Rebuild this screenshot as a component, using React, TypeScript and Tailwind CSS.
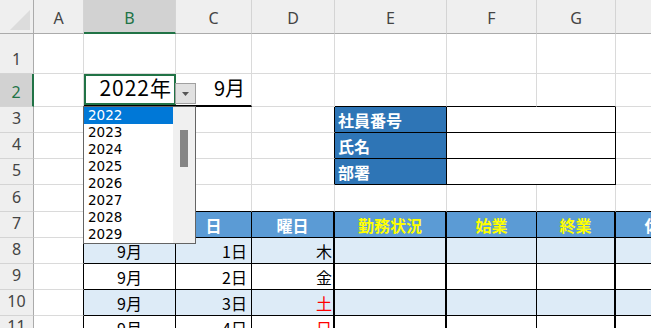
const jp = "font-['Noto_Sans_CJK_JP',sans-serif]";

const days = [
  { d: 1, w: "木", red: false },
  { d: 2, w: "金", red: false },
  { d: 3, w: "土", red: true },
  { d: 4, w: "日", red: true },
];

const years = ["2022", "2023", "2024", "2025", "2026", "2027", "2028", "2029"];

function ColHead({ label, sel = false }: { label: string; sel?: boolean }) {
  return (
    <div
      className={`flex items-center justify-center pt-[3px] border-r border-r-[#d4d4d4] font-['Noto_Sans',sans-serif] text-[16px] ${
        sel
          ? "bg-[#d2d2d2] border-b-2 border-b-[#217346] text-[#217346]"
          : "bg-[#efefef] border-b border-b-[#ababab] text-[#444]"
      }`}
    >
      {label}
    </div>
  );
}

function RowHead({ n, sel = false }: { n: number; sel?: boolean }) {
  return (
    <div
      className={`flex items-end justify-center pb-[6px] leading-none border-b border-b-[#d4d4d4] font-['Noto_Sans',sans-serif] text-[16px] ${
        sel
          ? "bg-[#d2d2d2] border-r-2 border-r-[#217346] text-[#217346]"
          : "bg-[#efefef] border-r border-r-[#ababab] text-[#444]"
      }`}
    >
      {n}
    </div>
  );
}

const cell = "border-r border-b border-r-[#dadada] border-b-[#dadada] bg-white";

export default function App() {
  return (
    <div className={`relative w-[651px] h-[328px] overflow-hidden bg-white ${jp}`}>
      <div className="grid grid-cols-[34px_50px_92px_76px_83px_112px_90px_79px_122px] grid-rows-[34px_40px_33px_26px_26px_26px_27px_26px_26px_26px_26px]">
        {/* column headers */}
        <div className="relative bg-[#efefef] border-r border-b border-r-[#ababab] border-b-[#ababab]">
          <svg className="absolute left-[10px] top-[10px]" width="20" height="20" viewBox="0 0 20 20">
            <polygon points="20,0 20,20 0,20" fill="#dcdcdc" />
          </svg>
        </div>
        <ColHead label="A" />
        <ColHead label="B" sel />
        <ColHead label="C" />
        <ColHead label="D" />
        <ColHead label="E" />
        <ColHead label="F" />
        <ColHead label="G" />
        <ColHead label="H" />

        {/* row 1 */}
        <RowHead n={1} />
        {Array.from({ length: 8 }).map((_, i) => (
          <div key={i} className={cell} />
        ))}

        {/* row 2 */}
        <RowHead n={2} sel />
        <div className={cell} />
        <div className="flex items-center justify-end pr-[4px] pb-[3px] bg-white border-b-2 border-b-black shadow-[inset_0_0_0_2px_#217346] text-[21px] tracking-[1px] text-black">
          2022年
        </div>
        <div className="flex items-center justify-end pr-[6px] pb-[3px] bg-white border-r border-r-[#dadada] border-b-2 border-b-black text-[20px] text-black">
          9月
        </div>
        <div className={cell} />
        <div className="bg-white border-r border-b border-r-[#dadada] border-b-black" />
        <div className="bg-white border-r border-b border-r-[#dadada] border-b-black" />
        <div className="bg-white border-r border-b border-r-[#dadada] border-b-black" />
        <div className={cell} />

        {/* rows 3-5: info box */}
        {["社員番号", "氏名", "部署"].map((t, i) => (
          <div key={t} className="contents">
            <RowHead n={3 + i} />
            <div className={cell} />
            <div className={cell} />
            <div className={cell} />
            <div className="bg-white border-r border-b border-r-black border-b-[#dadada]" />
            <div className="flex items-center pl-[3px] bg-[#2e75b6] border-r border-b border-black text-[16px] font-bold text-white">
              {t}
            </div>
            <div className="col-span-2 bg-white border-r border-b border-black" />
            <div className={cell} />
          </div>
        ))}

        {/* row 6 */}
        <RowHead n={6} />
        <div className={cell} />
        {Array.from({ length: 7 }).map((_, i) => (
          <div key={i} className="bg-white border-r border-b border-r-[#dadada] border-b-black" />
        ))}

        {/* row 7: table header */}
        <RowHead n={7} />
        <div className="bg-white border-r border-b border-r-black border-b-[#dadada]" />
        <div className="flex items-center justify-center bg-[#5b9bd5] border-r border-b border-black text-[16px] font-bold text-white">
          月
        </div>
        <div className="flex items-center justify-center bg-[#5b9bd5] border-r border-b border-black text-[16px] font-bold text-white">
          日
        </div>
        <div className="flex items-center justify-center bg-[#5b9bd5] border-r-2 border-b border-black text-[16px] font-bold text-white">
          曜日
        </div>
        <div className="flex items-center justify-center bg-[#5b9bd5] border-r-2 border-b border-black text-[16px] font-bold text-[#ffff00]">
          勤務状況
        </div>
        <div className="flex items-center justify-center bg-[#5b9bd5] border-r border-b border-black text-[16px] font-bold text-[#ffff00]">
          始業
        </div>
        <div className="flex items-center justify-center bg-[#5b9bd5] border-r-2 border-b border-black text-[16px] font-bold text-[#ffff00]">
          終業
        </div>
        <div className="flex items-center justify-center bg-[#5b9bd5] border-r border-b border-black text-[16px] font-bold text-white">
          休憩時間
        </div>

        {/* rows 8-11: data */}
        {days.map((r, i) => {
          const bg = i % 2 === 0 ? "bg-[#ddebf7]" : "bg-white";
          return (
            <div key={r.d} className="contents">
              <RowHead n={8 + i} />
              <div className="bg-white border-r border-b border-r-black border-b-[#dadada]" />
              <div className={`flex items-center justify-center border-r border-b border-black text-[16px] text-black ${bg}`}>
                9月
              </div>
              <div className={`flex items-center justify-end pr-[4px] border-r border-b border-black text-[16px] text-black ${bg}`}>
                {r.d}日
              </div>
              <div
                className={`flex items-center justify-end pr-[1px] border-r-2 border-b border-black text-[16px] ${bg} ${
                  r.red ? "text-[#ff0000]" : "text-black"
                }`}
              >
                {r.w}
              </div>
              <div className={`border-r-2 border-b border-black ${bg}`} />
              <div className={`border-r border-b border-black ${bg}`} />
              <div className={`border-r-2 border-b border-black ${bg}`} />
              <div className={`border-r border-b border-black ${bg}`} />
            </div>
          );
        })}
      </div>

      {/* dropdown arrow button */}
      <div className="absolute left-[175px] top-[83px] w-[21px] h-[21px] flex items-center justify-center bg-[#e1e1e1] border border-[#a0a0a0]">
        <svg width="7" height="4" viewBox="0 0 7 4">
          <polygon points="0,0 7,0 3.5,4" fill="#555" />
        </svg>
      </div>

      {/* dropdown list */}
      <div className="absolute left-[83px] top-[106px] w-[113px] h-[138px] flex bg-white border border-[#646464]">
        <div className="flex-1 flex flex-col font-['DejaVu_Sans',sans-serif] text-[13.5px] text-black">
          {years.map((y, i) => (
            <div
              key={y}
              className={`h-[17px] flex items-center pl-[4px] leading-none ${
                i === 0 ? "bg-[#0078d7] text-white" : ""
              }`}
            >
              {y}
            </div>
          ))}
        </div>
        <div className="w-[22px] bg-[#f0f0f0] flex justify-center pt-[23px]">
          <div className="w-[8px] h-[37px] bg-[#858585]" />
        </div>
      </div>
    </div>
  );
}
